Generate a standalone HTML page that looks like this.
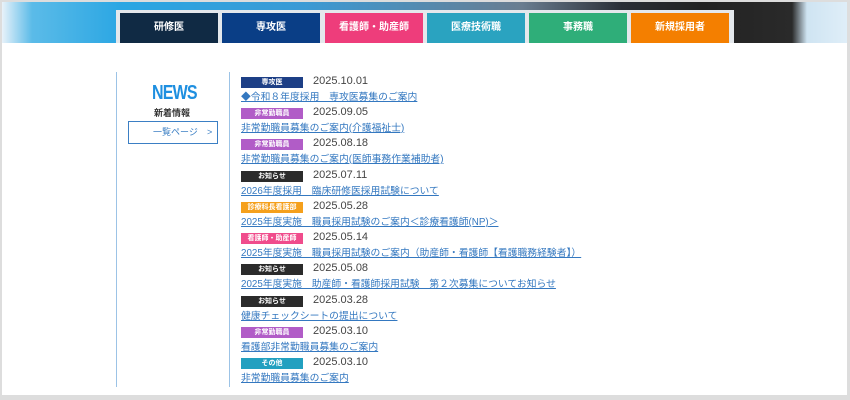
<!DOCTYPE html><html><head><meta charset="utf-8"><style>
body{margin:0;width:850px;height:400px;overflow:hidden;background:#ddd;font-family:"Liberation Sans","Noto Sans CJK JP",sans-serif;position:relative}
.frame{position:absolute;left:2px;top:2px;width:845px;height:393px;background:#fff;overflow:hidden}
.banner{position:absolute;left:0;top:0;width:845px;height:41px;background:linear-gradient(90deg,#e8f2fa 0px,#5bbbe8 30px,#2aa6e3 120px,#3a9ad5 300px,#6a7d90 520px,#2a2e36 620px,#222 700px,#2a2a2a 790px,#cfe4f2 805px,#dfeef8 845px)}
.nav{position:absolute;left:114px;top:8px;width:618px;height:33px;background:#e4e8ec}
.nav div{position:absolute;top:3px;height:30px;width:98px;color:#fff;font-size:10px;font-weight:bold;text-align:center;line-height:30px}
.vl{position:absolute;top:70px;height:315px;width:1px;background:#9cc3e6}
.news{position:absolute;left:150px;top:80px;width:44px;text-align:center;color:#1e8fe0;font-weight:bold;font-size:20px;letter-spacing:-1px;transform:scaleX(.8);transform-origin:left}
.sub{position:absolute;left:152px;top:104px;font-size:9px;font-weight:bold;color:#333}
.btn{position:absolute;left:126px;top:119px;width:88px;height:21px;border:1px solid #3b7fc4;font-size:9px;color:#3b7fc4;line-height:21px}
.row{position:absolute;left:239px}
.tag{position:absolute;left:0;top:0;width:62px;height:11px;color:#fff;font-size:7px;font-weight:bold;text-align:center;line-height:11px}
.date{position:absolute;left:72px;top:-2px;font-size:11px;color:#444;white-space:nowrap}
.lk{position:absolute;left:0;top:12px;font-size:9.8px;color:#3478c0;text-decoration:underline;white-space:nowrap}
</style></head><body><div class="frame">
<div class="banner"></div>
<div class="nav">
<div style="left:4px;background:#102a44">研修医</div>
<div style="left:106px;background:#0a3e86">専攻医</div>
<div style="left:209px;background:#ee3d7b">看護師・助産師</div>
<div style="left:311px;background:#2aa3c0">医療技術職</div>
<div style="left:413px;background:#2fae79">事務職</div>
<div style="left:515px;background:#f47f00">新規採用者</div>
</div>
<div class="vl" style="left:114px"></div><div class="vl" style="left:227px"></div>
<div class="news">NEWS</div><div class="sub">新着情報</div>
<div class="btn"><span style="position:absolute;left:24px">一覧ページ</span><span style="position:absolute;left:78px">&gt;</span></div>

<div class="row" style="top:75px"><div class="tag" style="background:#1d3f86">専攻医</div><div class="date">2025.10.01</div><div class="lk">◆令和８年度採用　専攻医募集のご案内</div></div>
<div class="row" style="top:106px"><div class="tag" style="background:#b15cc7">非常勤職員</div><div class="date">2025.09.05</div><div class="lk">非常勤職員募集のご案内(介護福祉士)</div></div>
<div class="row" style="top:137px"><div class="tag" style="background:#b15cc7">非常勤職員</div><div class="date">2025.08.18</div><div class="lk">非常勤職員募集のご案内(医師事務作業補助者)</div></div>
<div class="row" style="top:169px"><div class="tag" style="background:#2b2b2b">お知らせ</div><div class="date">2025.07.11</div><div class="lk">2026年度採用　臨床研修医採用試験について</div></div>
<div class="row" style="top:200px"><div class="tag" style="background:#f5a01c">診療科長看護部</div><div class="date">2025.05.28</div><div class="lk">2025年度実施　職員採用試験のご案内＜診療看護師(NP)＞</div></div>
<div class="row" style="top:231px"><div class="tag" style="background:#f04c8c">看護師・助産師</div><div class="date">2025.05.14</div><div class="lk">2025年度実施　職員採用試験のご案内（助産師・看護師【看護職務経験者】）</div></div>
<div class="row" style="top:262px"><div class="tag" style="background:#2b2b2b">お知らせ</div><div class="date">2025.05.08</div><div class="lk">2025年度実施　助産師・看護師採用試験　第２次募集についてお知らせ</div></div>
<div class="row" style="top:294px"><div class="tag" style="background:#2b2b2b">お知らせ</div><div class="date">2025.03.28</div><div class="lk">健康チェックシートの提出について</div></div>
<div class="row" style="top:325px"><div class="tag" style="background:#b15cc7">非常勤職員</div><div class="date">2025.03.10</div><div class="lk">看護部非常勤職員募集のご案内</div></div>
<div class="row" style="top:356px"><div class="tag" style="background:#22a0c0">その他</div><div class="date">2025.03.10</div><div class="lk">非常勤職員募集のご案内</div></div>
</div></body></html>
